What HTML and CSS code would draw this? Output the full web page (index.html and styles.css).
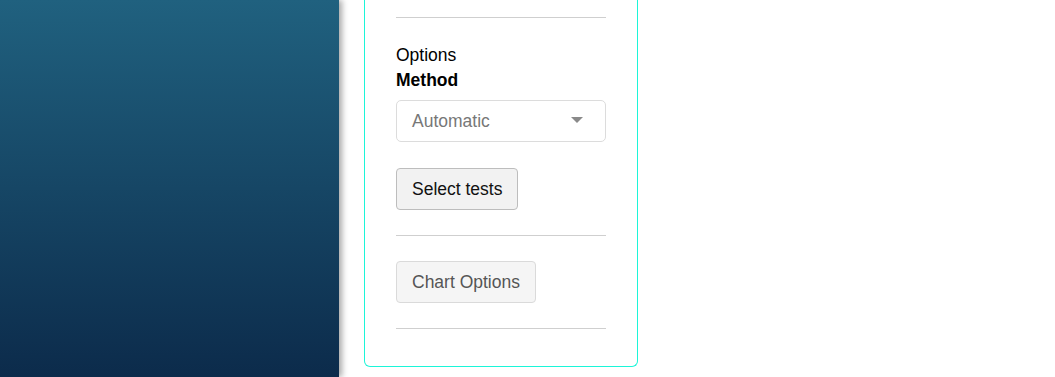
FILE: index.html
```html
<!DOCTYPE html>
<html>
<head>
<meta charset="utf-8">
<link rel="stylesheet" href="styles.css">
</head>
<body>
<div class="app">
  <aside class="sidebar"></aside>
  <main class="main">
    <section class="panel">
      <hr class="rule">
      <div class="label">Options</div>
      <div class="label bold">Method</div>
      <div class="select">
        <span>Automatic</span>
        <span class="caret"></span>
      </div>
      <div class="row"><button class="btn">Select tests</button></div>
      <hr class="rule">
      <div class="row row-tight"><button class="btn btn-muted">Chart Options</button></div>
      <hr class="rule">
    </section>
  </main>
</div>
</body>
</html>
```
FILE: styles.css
```css
* { box-sizing: border-box; }
html, body { margin: 0; padding: 0; height: 100%; background: #fff; }
body { font-family: "Liberation Sans", Arial, sans-serif; font-size: 17.5px; color: #000; overflow: hidden; }
.app { display: flex; height: 377px; }
.sidebar {
  width: 339px; flex: none; height: 100%;
  background: linear-gradient(to bottom, #20617f 0%, #0c2b4b 100%);
  box-shadow: 3px 0 6px rgba(0,0,0,0.35);
  position: relative; z-index: 1;
}
.main { padding-left: 25px; display: flex; align-items: flex-start; }
.panel {
  width: 274px;
  border: 1px solid #1cf5d8;
  border-top: none;
  border-radius: 0 0 6px 6px;
  padding: 17px 31px 37px 31px;
  display: flex; flex-direction: column;
}
.rule { margin: 0; border: none; border-top: 1px solid #cfcfcf; height: 0; }
.label { line-height: 25px; }
.label:first-of-type { margin-top: 25px; }
.bold { font-weight: bold; }
.select {
  margin-top: 7px;
  height: 42px;
  border: 1px solid #dcdcdc;
  border-radius: 5px;
  display: flex; align-items: center; justify-content: space-between;
  padding: 0 22px 0 15px;
  color: #777;
}
.caret { width: 0; height: 0; border-left: 6px solid transparent; border-right: 6px solid transparent; border-top: 6px solid #8a8a8a; margin-top: -2px; }
.row { display: flex; margin: 26px 0 25px; }
.row-tight { margin-top: 25px; }
.btn {
  font: inherit; font-size: 17.5px;
  height: 42px; padding: 0 15px;
  background: #f2f2f2; border: 1px solid #bdbdbd; border-radius: 4px; color: #111;
}
.btn-muted { border-color: #dadada; color: #555; background: #f5f5f5; }
```
